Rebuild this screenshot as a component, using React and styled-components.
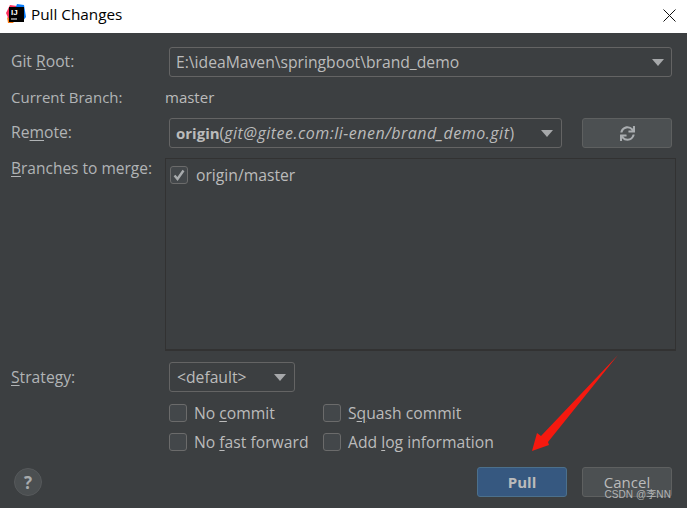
import React from "react";
import styled, { createGlobalStyle } from "styled-components";
import { FaSync } from "react-icons/fa";

const Global = createGlobalStyle`
  html, body {
    margin: 0;
    padding: 0;
    background: #3c3f41;
  }
  * {
    box-sizing: border-box;
  }
`;

const Window = styled.div`
  position: relative;
  width: 687px;
  height: 508px;
  overflow: hidden;
  display: flex;
  flex-direction: column;
  background: #3c3f41;
  color: #bbbbbb;
  font-family: "Open Sans", "Noto Sans", sans-serif;
  font-size: 15.7px;
`;

const TitleBar = styled.div`
  height: 33px;
  flex: none;
  display: flex;
  align-items: center;
  background: #ffffff;
  color: #000000;
  padding: 0 11px 5px 6px;
  font-size: 15.3px;
`;

const TitleText = styled.span`
  margin-left: 5px;
  flex: 1;
`;

const CloseBtn = styled.svg`
  flex: none;
  margin-top: 3px;
`;

const Body = styled.div`
  flex: 1;
  padding: 14px 15px 11px 11px;
  display: flex;
  flex-direction: column;
`;

const Row = styled.div`
  display: flex;
  align-items: ${(p) => (p.$top ? "flex-start" : "center")};
  height: ${(p) => p.$h || 30}px;
  margin-top: ${(p) => p.$mt || 0}px;
`;

const Label = styled.div`
  width: 158px;
  flex: none;
  color: #b1b4b6;
  margin-top: ${(p) => p.$mt ?? -2}px;
`;

const BranchLabel = styled(Label)`
  font-size: 15px;
`;

const MergeLabel = styled(Label)`
  font-size: 15.5px;
  margin-top: -1px;
`;

const Mn = styled.span`
  text-decoration: underline;
  text-underline-offset: 2px;
`;

const Combo = styled.div`
  flex: ${(p) => (p.$w ? "none" : 1)};
  width: ${(p) => (p.$w ? `${p.$w}px` : "auto")};
  height: 30px;
  display: flex;
  align-items: center;
  justify-content: space-between;
  border: 1px solid #646464;
  border-radius: 3px;
  padding: 0 ${(p) => p.$pr || 8}px 0 ${(p) => p.$pl || 6}px;
  white-space: nowrap;
  overflow: hidden;
`;

const Arrow = styled.span`
  flex: none;
  width: 0;
  height: 0;
  border-left: 6px solid transparent;
  border-right: 6px solid transparent;
  border-top: 7px solid #a6a8aa;
`;

const Value = styled.span`
  margin: -2px 0 0 -4px;
  font-size: 15px;
`;

const Bold = styled.b`
  font-size: 15px;
`;

const Italic = styled.i`
  font-style: italic;
  font-size: 16px;
  letter-spacing: 0.5px;
`;

const Button = styled.button`
  width: 90px;
  height: 30px;
  flex: none;
  display: flex;
  align-items: center;
  justify-content: center;
  margin-left: ${(p) => p.$ml || 0}px;
  border-radius: 3px;
  border: 1px solid ${(p) => (p.$primary ? "#4c708c" : "#5e6060")};
  background: ${(p) => (p.$primary ? "#365880" : "#4c5052")};
  color: #bbbbbb;
  font-family: inherit;
  font-size: 15px;
  font-weight: ${(p) => (p.$primary ? 700 : 400)};
  padding: 0;
`;

const List = styled.div`
  flex: 1;
  height: 193px;
  margin: 0 -4px;
  border: 1px solid #323232;
  border-bottom-width: 2px;
  padding: 6px 4px;
  display: flex;
  align-items: flex-start;
`;

const Box = styled.span`
  width: 18px;
  height: 18px;
  flex: none;
  display: flex;
  align-items: center;
  justify-content: center;
  border: 1px solid #6b6b6b;
  border-radius: 3px;
  background: #43474a;
`;

const ListItem = styled.div`
  display: flex;
  align-items: center;
  gap: 8px;
  margin-top: -1px;
`;

const Options = styled.div`
  margin: 12px 0 0 158px;
  display: grid;
  grid-template-columns: 154px auto;
  justify-content: start;
  row-gap: 11px;
`;

const Option = styled.div`
  display: flex;
  align-items: center;
  gap: 7px;
  height: 18px;
  white-space: nowrap;
`;

const Footer = styled.div`
  margin-top: auto;
  display: flex;
  align-items: center;
  justify-content: flex-end;
`;

const Help = styled.div`
  margin: 0 auto 0 3px;
  width: 28px;
  height: 28px;
  border-radius: 50%;
  display: flex;
  align-items: center;
  justify-content: center;
  background: #4b4f51;
  border: 1px solid #56595b;
  color: #a8abad;
  font-weight: 700;
  font-size: 17px;
`;

const RedArrow = styled.svg`
  position: absolute;
  left: 525px;
  top: 350px;
`;

const Watermark = styled.div`
  position: absolute;
  right: 16px;
  top: 486px;
  font-family: "Liberation Sans", "Noto Sans CJK SC", sans-serif;
  font-size: 10px;
  letter-spacing: 0.1px;
  color: #c4c6c7;
  opacity: 0.85;
  white-space: nowrap;
`;

const Logo = () => (
  <svg width="20" height="20" viewBox="0 0 20 20">
    <polygon points="0,9 4,1 11,2 8,16 3,16" fill="#fe315d" />
    <polygon points="1,13 8,19 2,19" fill="#f97a12" />
    <polygon points="11,0 18,1 20,13 16,18 8,8" fill="#087cfa" />
    <rect x="3" y="3" width="15" height="15" fill="#000" />
    <text x="5" y="11" fontSize="8" fontWeight="700" fill="#fff" fontFamily="Liberation Sans, sans-serif">IJ</text>
    <rect x="5" y="14.5" width="6" height="1" fill="#fff" />
  </svg>
);

const Check = () => (
  <svg width="14" height="14" viewBox="0 0 14 14">
    <path d="M2.5 7.5 L5.5 11 L11.5 2.5" fill="none" stroke="#a8abad" strokeWidth="2.4" />
  </svg>
);

export default function App() {
  return (
    <Window>
      <Global />
      <TitleBar>
        <Logo />
        <TitleText>Pull Changes</TitleText>
        <CloseBtn width="13" height="13" viewBox="0 0 13 13">
          <path d="M0.5 0.5 L12.5 12.5 M12.5 0.5 L0.5 12.5" stroke="#111" strokeWidth="1" />
        </CloseBtn>
      </TitleBar>
      <Body>
        <Row>
          <Label>
            Git <Mn>R</Mn>oot:
          </Label>
          <Combo $pr={7}>
            <span>E:\ideaMaven\springboot\brand_demo</span>
            <Arrow />
          </Combo>
        </Row>
        <Row $h={41}>
          <BranchLabel>Current Branch:</BranchLabel>
          <Value>master</Value>
        </Row>
        <Row>
          <Label>
            Re<Mn>m</Mn>ote:
          </Label>
          <Combo $pr={8}>
            <span>
              <Bold>origin</Bold>(<Italic>git@gitee.com:li-enen/brand_demo.git</Italic>)
            </span>
            <Arrow />
          </Combo>
          <Button $ml={20} aria-label="refresh">
            <FaSync size={15} color="#a9adb0" />
          </Button>
        </Row>
        <Row $top $h={193} $mt={10}>
          <MergeLabel>
            <Mn>B</Mn>ranches to merge:
          </MergeLabel>
          <List>
            <ListItem>
              <Box>
                <Check />
              </Box>
              origin/master
            </ListItem>
          </List>
        </Row>
        <Row $mt={11}>
          <Label $mt={0}>
            <Mn>S</Mn>trategy:
          </Label>
          <Combo $w={126} $pl={7}>
            <span>&lt;default&gt;</span>
            <Arrow />
          </Combo>
        </Row>
        <Options>
          <Option>
            <Box />
            <span>
              No <Mn>c</Mn>ommit
            </span>
          </Option>
          <Option>
            <Box />
            <span>
              S<Mn>q</Mn>uash commit
            </span>
          </Option>
          <Option>
            <Box />
            <span>
              No <Mn>f</Mn>ast forward
            </span>
          </Option>
          <Option>
            <Box />
            <span>
              Add <Mn>l</Mn>og information
            </span>
          </Option>
        </Options>
        <Footer>
          <Help>?</Help>
          <Button $primary>Pull</Button>
          <Button $ml={15}>Cancel</Button>
        </Footer>
      </Body>
      <RedArrow width="100" height="105" viewBox="525 350 100 105">
        <polygon points="618,355 548,442 549,445 532,451 537,433 541,436" fill="#f5190f" />
      </RedArrow>
      <Watermark>CSDN @李NN</Watermark>
    </Window>
  );
}
